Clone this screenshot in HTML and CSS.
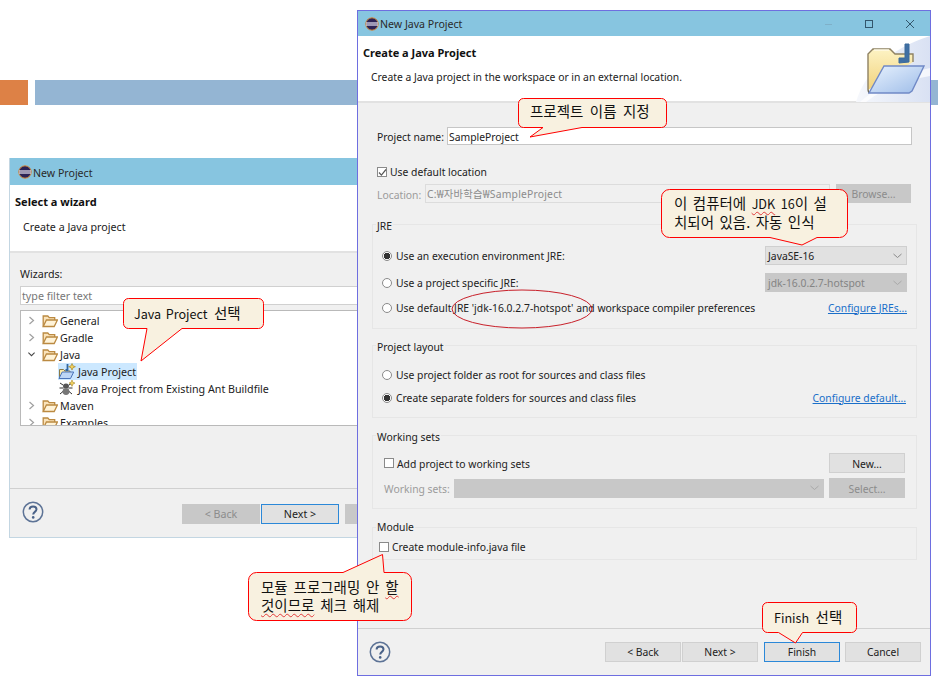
FILE: index.html
```html
<!DOCTYPE html>
<html lang="ko">
<head>
<meta charset="utf-8">
<title>New Java Project</title>
<link rel="stylesheet" href="styles.css">
</head>
<body>
<div class="slide">
  <div class="band">
    <div class="band-orange"></div>
    <div class="band-blue"></div>
  </div>

  <svg width="0" height="0" class="defs">
    <defs>
      <g id="eclipse">
        <circle cx="7" cy="7" r="6.2" fill="#2c2255" stroke="#d98b3a" stroke-width="1"/>
        <rect x="1" y="5.4" width="12" height="1.2" fill="#e8e4f4"/>
        <rect x="1" y="7.4" width="12" height="1.2" fill="#e8e4f4"/>
      </g>
      <g id="folder">
        <path d="M1.2 13.5V3h4.6l1.5 1.6h5.4v2.4" fill="#fae3ba" stroke="#bb8a42" stroke-width="1.3"/>
        <path d="M1.2 13.5l3.2-6.5h11l-3.2 6.5z" fill="#fff3d8" stroke="#bb8a42" stroke-width="1.3"/>
      </g>
      <g id="help">
        <circle cx="11" cy="11" r="9.7" fill="none" stroke="#5d7396" stroke-width="1.5"/>
        <path d="M7.6 8.6c0-2 1.5-3.2 3.5-3.2s3.4 1.1 3.4 2.9c0 2.6-3.3 2.6-3.3 5.2" fill="none" stroke="#4a6288" stroke-width="2"/>
        <circle cx="11.2" cy="16.4" r="1.3" fill="#4a6288"/>
      </g>
    </defs>
  </svg>

  <section class="win win-back">
    <header class="title title-back">
      <svg class="title-icon" width="14" height="14" viewBox="0 0 14 14"><use href="#eclipse"/></svg>
      <span class="title-text">New Project</span>
    </header>
    <div class="head head-back">
      <h1 class="head-title">Select a wizard</h1>
      <p class="head-sub head-sub-back">Create a Java project</p>
    </div>
    <div class="body body-back">
      <div class="wiz-label">Wizards:</div>
      <div class="filter">type filter text</div>
      <div class="tree">
        <div class="tree-row"><svg class="arrow" width="7" height="9" viewBox="0 0 7 9"><path d="M1.5 1l4 3.5-4 3.5" fill="none" stroke="#a0a0a0" stroke-width="1.2"/></svg><svg class="tree-folder" width="16" height="15" viewBox="0 0 16 15"><use href="#folder"/></svg><span>General</span></div>
        <div class="tree-row"><svg class="arrow" width="7" height="9" viewBox="0 0 7 9"><path d="M1.5 1l4 3.5-4 3.5" fill="none" stroke="#a0a0a0" stroke-width="1.2"/></svg><svg class="tree-folder" width="16" height="15" viewBox="0 0 16 15"><use href="#folder"/></svg><span>Gradle</span></div>
        <div class="tree-row"><svg class="arrow" width="7" height="9" viewBox="0 0 9 7"><path d="M.5 1l4 4 4-4" fill="none" stroke="#444" stroke-width="1.3"/></svg><svg class="tree-folder" width="16" height="15" viewBox="0 0 16 15"><use href="#folder"/></svg><span>Java</span></div>
        <div class="tree-row tree-child">
          <div class="tree-sel">
            <svg class="child-icon" width="18" height="17" viewBox="0 0 18 17">
              <path d="M1.5 14V6.5h4l1.5 1.5h5v2" fill="#fbeaa8" stroke="#8c7a45"/>
              <path d="M1 15.5l3.2-6.5h11.5l-3.2 6.5z" fill="#bcd6f5" stroke="#4a74b8"/>
              <path d="M9.5 1v6H7.5" fill="none" stroke="#2f66a3" stroke-width="1.8"/>
              <path d="M14 .5l1 2.4 2.4.8-2.4 1-1 2.4-1-2.4-2.4-1 2.4-.8z" fill="#f4d35e" stroke="#a88a2a" stroke-width=".7"/>
            </svg>
            <span>Java Project</span>
          </div>
        </div>
        <div class="tree-row tree-child">
          <div class="tree-plain">
            <svg class="child-icon" width="18" height="17" viewBox="0 0 18 17">
              <ellipse cx="8" cy="6" rx="3" ry="2.5" fill="#555"/>
              <ellipse cx="8" cy="11.5" rx="3.4" ry="3.4" fill="#777"/>
              <path d="M2 3l3 2M14 3l-3 2M1.5 8h4M14.5 8h-4M2 14l3-2.5M14 14l-3-2.5" stroke="#333" stroke-width="1" fill="none"/>
              <path d="M14 0l1 2.4 2 .6-2 1-1 2.4-1-2.4-2-1 2-.6z" fill="#f4d35e" stroke="#a88a2a" stroke-width=".6"/>
            </svg>
            <span>Java Project from Existing Ant Buildfile</span>
          </div>
        </div>
        <div class="tree-row"><svg class="arrow" width="7" height="9" viewBox="0 0 7 9"><path d="M1.5 1l4 3.5-4 3.5" fill="none" stroke="#a0a0a0" stroke-width="1.2"/></svg><svg class="tree-folder" width="16" height="15" viewBox="0 0 16 15"><use href="#folder"/></svg><span>Maven</span></div>
        <div class="tree-row"><svg class="arrow" width="7" height="9" viewBox="0 0 7 9"><path d="M1.5 1l4 3.5-4 3.5" fill="none" stroke="#a0a0a0" stroke-width="1.2"/></svg><svg class="tree-folder" width="16" height="15" viewBox="0 0 16 15"><use href="#folder"/></svg><span>Examples</span></div>
      </div>
    </div>
    <footer class="foot foot-back">
      <svg class="help" width="22" height="22" viewBox="0 0 22 22"><use href="#help"/></svg>
      <div class="foot-buttons foot-buttons-back">
        <div class="btn btn-off btn-wide">&lt; Back</div>
        <div class="btn btn-focus btn-wide">Next &gt;</div>
        <div class="btn btn-off btn-wide btn-gap"></div>
      </div>
    </footer>
  </section>

  <section class="win win-front">
    <header class="title title-front">
      <svg class="title-icon" width="14" height="14" viewBox="0 0 14 14"><use href="#eclipse"/></svg>
      <span class="title-text">New Java Project</span>
      <svg class="win-btns" width="95" height="10" viewBox="0 0 95 10">
        <path d="M0 5.5h7" stroke="#7fb0c8"/>
        <rect x="40.5" y="1.5" width="7" height="7" fill="none" stroke="#33566c"/>
        <path d="M81 1l8 8M89 1l-8 8" stroke="#33566c"/>
      </svg>
    </header>
    <div class="head head-front">
      <div class="head-text">
        <h1 class="head-title">Create a Java Project</h1>
        <p class="head-sub">Create a Java project in the workspace or in an external location.</p>
      </div>
      <svg class="banner" width="74" height="66" viewBox="0 0 74 66">
        <defs>
          <linearGradient id="sheen" x1="0" y1="0" x2="1" y2="0"><stop offset="0" stop-color="#f6f8fc"/><stop offset="1" stop-color="#d9e1f3"/></linearGradient>
          <linearGradient id="fold" x1="0" y1="0" x2="0" y2="1"><stop offset="0" stop-color="#fdf3c4"/><stop offset="1" stop-color="#f1d27c"/></linearGradient>
          <linearGradient id="front" x1="0" y1="0" x2="1" y2="1"><stop offset="0" stop-color="#e8f2fe"/><stop offset="1" stop-color="#9dbce8"/></linearGradient>
        </defs>
        <path d="M0 66C8 38 34 12 74 0V66z" fill="url(#sheen)"/>
        <path d="M10 66C28 52 50 44 74 40V32C46 38 22 50 4 66z" fill="#fff" opacity=".7"/>
        <path d="M12 54V18l5-5h17l5 5h18v8" fill="url(#fold)" stroke="#8f8263" stroke-width="1.4"/>
        <path d="M18 14h15" stroke="#fffbe8" stroke-width="1.4"/>
        <path d="M12 54l1 3" stroke="#6d6a58" stroke-width="1.4"/>
        <path d="M43 27v-5h6V8h4v18z" fill="#3f6fa3" stroke="#3a6a9c"/>
        <path d="M13 57l15-27h40L56 55l-3 2z" fill="url(#front)" stroke="#7089c6" stroke-width="1.4"/>
      </svg>
    </div>
    <div class="body body-front">
      <div class="row row-name">
        <label class="lbl lbl-name">Project name:</label>
        <div class="field field-name">SampleProject</div>
      </div>
      <div class="row row-check">
        <span class="check"><svg width="9" height="9" viewBox="0 0 9 9"><path d="M1 4.5l2.4 2.6L8 1.5" fill="none" stroke="#555" stroke-width="1.2"/></svg></span>
        <span>Use default location</span>
      </div>
      <div class="row row-loc">
        <span class="lbl-off lbl-loc">Location:</span>
        <div class="field-off field-loc">C:₩자바학습₩SampleProject</div>
        <div class="btn btn-off btn-browse">Browse...</div>
      </div>

      <div class="group group-jre">
        <span class="legend">JRE</span>
        <div class="row radio-row radio-1">
          <span class="radio radio-on"></span><span class="grow">Use an execution environment JRE:</span>
          <div class="combo">JavaSE-16<svg class="chev" width="9" height="6" viewBox="0 0 9 6"><path d="M.5 1l4 3.5 4-3.5" fill="none" stroke="#8a8a8a"/></svg></div>
        </div>
        <div class="row radio-row radio-2">
          <span class="radio"></span><span class="grow">Use a project specific JRE:</span>
          <div class="combo combo-off">jdk-16.0.2.7-hotspot<svg class="chev" width="9" height="6" viewBox="0 0 9 6"><path d="M.5 1l4 3.5 4-3.5" fill="none" stroke="#a8a8a8"/></svg></div>
        </div>
        <div class="row radio-row radio-3">
          <span class="radio"></span><span class="grow">Use default JRE 'jdk-16.0.2.7-hotspot' and workspace compiler preferences</span>
          <a class="link">Configure JREs...</a>
        </div>
      </div>

      <div class="group group-layout">
        <span class="legend">Project layout</span>
        <div class="row radio-row layout-1">
          <span class="radio"></span><span class="grow">Use project folder as root for sources and class files</span>
        </div>
        <div class="row radio-row layout-2">
          <span class="radio radio-on"></span><span class="grow">Create separate folders for sources and class files</span>
          <a class="link link-default">Configure default...</a>
        </div>
      </div>

      <div class="group group-sets">
        <span class="legend">Working sets</span>
        <div class="row sets-1">
          <span class="check check-sets"></span><span class="grow sets-text">Add project to working sets</span>
          <div class="btn btn-side">New...</div>
        </div>
        <div class="row sets-2">
          <span class="lbl-off lbl-sets">Working sets:</span>
          <div class="combo combo-off combo-sets"><svg class="chev" width="9" height="6" viewBox="0 0 9 6"><path d="M.5 1l4 3.5 4-3.5" fill="none" stroke="#a8a8a8"/></svg></div>
          <div class="btn btn-off btn-side">Select...</div>
        </div>
      </div>

      <div class="group group-module">
        <span class="legend legend-module">Module</span>
        <div class="row module-row">
          <span class="check check-module"></span><span>Create module-info.java file</span>
        </div>
      </div>
    </div>
    <footer class="foot foot-front">
      <svg class="help" width="22" height="22" viewBox="0 0 22 22"><use href="#help"/></svg>
      <div class="foot-buttons">
        <div class="btn btn-foot">&lt; Back</div>
        <div class="btn btn-foot">Next &gt;</div>
        <div class="btn btn-focus btn-foot btn-gap">Finish</div>
        <div class="btn btn-foot btn-gap-small">Cancel</div>
      </div>
    </footer>
  </section>

  <svg class="marks" width="938" height="684" viewBox="0 0 938 684">
    <ellipse cx="522" cy="309" rx="70" ry="19" fill="none" stroke="#c8202a" stroke-width="1"/>
    <g fill="#f8f1e0" stroke="#ff0000" stroke-width="1">
      <path d="M128.5 298.5H258.5a5 5 0 0 1 5 5V323.5a5 5 0 0 1-5 5H182L141 361L147 328.5H128.5a5 5 0 0 1-5-5V303.5a5 5 0 0 1 5-5Z"/>
      <path d="M523.5 98.5H661.5a5 5 0 0 1 5 5V122.5a5 5 0 0 1-5 5H582L530 137L543 127.5H523.5a5 5 0 0 1-5-5V103.5a5 5 0 0 1 5-5Z"/>
      <path d="M669.5 189.5H839.5a8 8 0 0 1 8 8V229.5a8 8 0 0 1-8 8H817L802 245L770 237.5H669.5a8 8 0 0 1-8-8V197.5a8 8 0 0 1 8-8Z"/>
      <path d="M256.5 572.5H343L382.5 554.5L384 572.5H403.5a8 8 0 0 1 8 8V612.5a8 8 0 0 1-8 8H256.5a8 8 0 0 1-8-8V580.5a8 8 0 0 1 8-8Z"/>
      <path d="M767.5 602.5H851.5a5 5 0 0 1 5 5V627.5a5 5 0 0 1-5 5H802.5L795.5 643L778.5 632.5H767.5a5 5 0 0 1-5-5V607.5a5 5 0 0 1 5-5Z"/>
    </g>
  </svg>

  <div class="note note-java"><span class="latin">Java Project</span> 선택</div>
  <div class="note note-name">프로젝트 이름 지정</div>
  <div class="note note-jdk">이 컴퓨터에 <span class="squig latin">JDK</span> <span class="latin">16</span>이 설<br>치되어 있음. 자동 인식</div>
  <div class="note note-module">모듈 프로그래밍 안 <span class="squig">할</span><br><span class="squig">것이므로</span> 체크 해제</div>
  <div class="note note-finish"><span class="latin">Finish</span> 선택</div>
</div>
</body>
</html>
```

FILE: styles.css
```css
* { box-sizing: border-box; }
html, body { margin: 0; padding: 0; background: #fff; }
body { width: 938px; height: 684px; overflow: hidden; }

.slide {
  position: relative;
  width: 938px;
  height: 684px;
  overflow: hidden;
  font-family: "Noto Sans", "Noto Sans CJK KR", sans-serif;
  font-size: 10.35px;
  color: #222;
}
.defs { position: absolute; }

.band { display: flex; gap: 7px; padding-top: 80px; }
.band-orange { width: 28px; height: 25px; background: #dd8146; }
.band-blue { flex: 1; height: 25px; background: #94b5d3; }

.win {
  position: absolute;
  display: flex;
  flex-direction: column;
  background: #f0f0f0;
  overflow: hidden;
}
.win-back {
  left: 9px; top: 158px;
  width: 352px; height: 380px;
  border-left: 1px solid #c3d6e2;
  border-bottom: 1px solid #c3d6e2;
  font-size: 10.7px;
}
.win-front {
  left: 357px; top: 10px;
  width: 574px; height: 666px;
  border: 1px solid #6e6ee0;
}

.title {
  display: flex;
  align-items: center;
  background: #87c5e0;
  color: #2a2a2a;
  font-size: 10.6px;
}
.title-back { height: 27px; padding-left: 8px; gap: 1px; }
.title-back .title-text { padding-top: 2px; }
.title-front { height: 25px; padding-left: 7px; gap: 1px; }
.title-text { flex: 1; }
.win-btns { margin-right: 10px; }

.head { background: #fff; border-bottom: 2px solid #e2e2e2; display: flex; }
.head-back { display: block; height: 68px; padding: 9px 0 0 5px; }
.head-front { height: 67px; padding-left: 5px; }
.head-text { flex: 1; padding-top: 9px; }
.head-title { margin: 0; font-size: 11px; line-height: 16px; font-weight: 700; color: #111; }
.head-sub { margin: 9px 0 0 8px; line-height: 15px; }
.head-sub-back { margin-top: 10px; }
.banner { flex: none; }

.body { flex: 1; }
.body-back { padding: 14px 0 0 10px; }
.wiz-label { line-height: 14px; }
.filter {
  height: 19px;
  margin-top: 5px;
  padding: 1px 0 0 1px;
  background: #fff;
  border: 1px solid #d0d0d0;
  color: #777;
  line-height: 16px;
}
.tree {
  height: 116px;
  margin-top: 5px;
  padding-top: 1px;
  background: #fff;
  border: 1px solid #b9b9b9;
  overflow: hidden;
}
.tree-row { display: flex; align-items: center; height: 17px; padding-left: 7px; }
.arrow { margin-right: 7px; flex: none; }
.tree-folder { margin-right: 2px; flex: none; }
.tree-child { padding-left: 37px; }
.tree-sel, .tree-plain { display: flex; align-items: center; height: 17px; padding-right: 1px; }
.tree-sel { background: #cce8ff; }
.child-icon { flex: none; margin-right: 2px; }

.foot { display: flex; align-items: center; border-top: 1px solid #d0d0d0; }
.foot-back { height: 49px; padding: 0 0 0 12px; }
.foot-front { height: 47px; padding: 0 9px 0 11px; border-top-color: #d0d0d0; }
.help { flex: none; }
.foot-back .help { margin-top: -3px; }
.foot-buttons { margin-left: auto; display: flex; gap: 1px; }
.foot-buttons-back { margin-left: 138px; margin-top: 1px; flex: none; }

.btn {
  display: flex;
  align-items: center;
  justify-content: center;
  height: 20px;
  flex: none;
  background: #e1e1e1;
  border: 1px solid #d0d0d0;
  color: #222;
}
.btn-off { background: #c8c8c8; border-color: #c8c8c8; color: #8c8c8c; }
.btn-focus { border-color: #2b88d8; }
.btn-wide { width: 78px; }
.btn-foot { width: 76px; }
.btn-gap { margin-left: 5px; }
.btn-gap-small { margin-left: 4px; }

.body-front { padding: 24px 0 0 14px; }
.row { display: flex; align-items: center; }
.row-name { height: 18px; }
.lbl-name { margin-left: 5px; width: 70px; flex: none; padding-top: 1px; }
.field-name {
  width: 465px;
  height: 18px;
  padding: 1px 0 0 1px;
  background: #fff;
  border: 1px solid #c6c6c6;
  line-height: 16px;
}
.row-check { height: 18px; margin: 18px 0 0 5px; gap: 3px; }
.check {
  display: inline-flex;
  width: 10px;
  height: 10px;
  flex: none;
  background: #fff;
  border: 1px solid #8a8a8a;
  align-items: center;
  justify-content: center;
}
.check svg { flex: none; }
.row-loc { height: 19px; margin: 3px 0 0 5px; }
.lbl-off { color: #9c9c9c; white-space: nowrap; }
.lbl-loc { width: 48px; flex: none; padding-top: 2px; }
.field-loc {
  width: 405px;
  height: 19px;
  padding: 2px 0 0 1px;
  background: #f0f0f0;
  border: 1px solid #dcdcdc;
  color: #8c8c8c;
  line-height: 15px;
  letter-spacing: .2px;
  flex: none;
}
.btn-browse { width: 75px; margin-left: 6px; height: 19px; padding-top: 1px; }

.group {
  position: relative;
  width: 545px;
  border: 1px solid #e6e6e6;
}
.legend {
  position: absolute;
  top: -6px;
  left: 3px;
  padding: 0 1px;
  background: #f0f0f0;
  line-height: 14px;
}
.legend-module { top: -8px; }
.group-jre { height: 105px; margin-top: 21px; padding-left: 9px; }
.group-layout { height: 73px; margin-top: 16px; padding-left: 9px; }
.group-sets { height: 74px; margin-top: 17px; }
.group-module { height: 33px; margin-top: 18px; }

.radio-row { height: 19px; padding-right: 9px; }
.radio-1 { margin-top: 21px; }
.radio-2 { margin-top: 8px; }
.radio-3 { margin-top: 6px; }
.layout-1 { margin-top: 19px; }
.layout-2 { margin-top: 4px; padding-right: 10px; }
.radio {
  width: 10px;
  height: 10px;
  margin-right: 4px;
  flex: none;
  border-radius: 50%;
  background: #fff;
  border: 1px solid #8a8a8a;
}
.radio-on { background: radial-gradient(circle, #333 0, #333 3px, #fff 3.4px); }
.grow { flex: 1; white-space: nowrap; }
.combo {
  position: relative;
  display: flex;
  align-items: center;
  justify-content: space-between;
  width: 142px;
  height: 19px;
  flex: none;
  padding: 0 4px 0 2px;
  background: #e1e1e1;
  border: 1px solid #cfcfcf;
}
.combo-off { background: #c8c8c8; border-color: #c8c8c8; color: #848484; }
.combo-sets { width: 370px; justify-content: flex-end; margin-right: 5px; }
.chev { flex: none; }
.link { color: #1a6fc9; text-decoration: underline; }
.sets-1 { height: 20px; margin-top: 17px; padding: 0 11px 0 11px; gap: 3px; }
.sets-text { padding-top: 1px; }
.sets-1 .btn { padding-top: 1px; }
.sets-2 { height: 20px; margin-top: 5px; padding: 0 11px 0 11px; }
.sets-2 .btn { padding-top: 2px; }
.lbl-sets { width: 70px; flex: none; padding-top: 1px; }
.btn-side { width: 76px; }
.module-row { height: 16px; margin-top: 11px; padding-left: 6px; gap: 3px; }

.marks { position: absolute; left: 0; top: 0; pointer-events: none; }

.note {
  position: absolute;
  font-family: "Noto Sans CJK KR", sans-serif;
  font-size: 14.5px;
  line-height: 18px;
  word-spacing: 2.4px;
  color: #111;
  white-space: nowrap;
}
.latin { font-size: 12.6px; word-spacing: 1px; }
.note-java { left: 134px; top: 304px; }
.note-name { left: 530px; top: 102px; }
.note-jdk { left: 674px; top: 194px; word-spacing: 1.4px; }
.note-module { left: 261px; top: 578px; word-spacing: 1.8px; }
.note-finish { left: 774px; top: 608px; }
.squig { text-decoration: underline wavy #e23b3b 1px; text-underline-offset: 2px; }
```
